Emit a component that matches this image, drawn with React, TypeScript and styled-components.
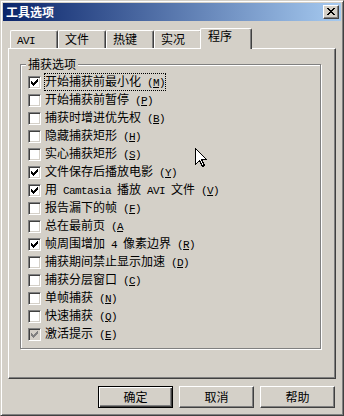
import styled, { createGlobalStyle } from "styled-components";

const face = "#d4d0c8";
const shadow = "#808080";
const dark = "#404040";

const options = [
  { text: "开始捕获前最小化", key: "M", checked: true, focused: true },
  { text: "开始捕获前暂停", key: "P" },
  { text: "捕获时增进优先权", key: "B" },
  { text: "隐藏捕获矩形", key: "H" },
  { text: "实心捕获矩形", key: "S" },
  { text: "文件保存后播放电影", key: "Y", checked: true },
  { text: "用 Camtasia 播放 AVI 文件", key: "V", checked: true },
  { text: "报告漏下的帧", key: "F" },
  { text: "总在最前页", key: "A", open: true },
  { text: "帧周围增加 4 像素边界", key: "R", checked: true },
  { text: "捕获期间禁止显示加速", key: "D" },
  { text: "捕获分层窗口", key: "C" },
  { text: "单帧捕获", key: "N" },
  { text: "快速捕获", key: "Q" },
  { text: "激活提示", key: "E", checked: true, disabled: true },
];

const tabs = ["AVI", "文件", "热键", "实况", "程序"];

const GlobalStyle = createGlobalStyle`
  html, body {
    margin: 0;
    padding: 0;
    background: ${face};
  }
  body {
    font-family: "Noto Sans CJK SC", sans-serif;
    font-size: 12px;
    color: #000;
  }
`;

const Window = styled.div`
  position: relative;
  width: 344px;
  height: 416px;
  box-sizing: border-box;
  background: ${face};
  border: 1px solid;
  border-color: ${face} ${dark} ${dark} ${face};
  box-shadow: inset 1px 1px #fff, inset -1px -1px ${shadow};
  padding: 2px;
  display: flex;
  flex-direction: column;
  overflow: hidden;
`;

const TitleBar = styled.div`
  height: 18px;
  flex: none;
  display: flex;
  align-items: center;
  justify-content: space-between;
  padding: 0 2px 0 3px;
  background: linear-gradient(to right, #0a246a, #a6caf0);
  color: #fff;
  font-weight: bold;
  font-size: 12px;
  line-height: 18px;
`;

const CloseButton = styled.div`
  width: 16px;
  height: 14px;
  box-sizing: border-box;
  background: ${face};
  border: 1px solid;
  border-color: #fff ${dark} ${dark} #fff;
  box-shadow: inset -1px -1px ${shadow};
  display: flex;
  align-items: center;
  justify-content: center;
  padding: 0 1px 1px 0;
`;

const Body = styled.div`
  padding: 7px 5px 0;
  display: flex;
  flex-direction: column;
`;

const TabStrip = styled.div`
  display: flex;
  align-items: flex-end;
  height: 20px;
  padding-left: 2px;
`;

const Tab = styled.div<{ $active?: boolean }>`
  position: relative;
  box-sizing: border-box;
  width: ${({ $active }) => ($active ? 52 : 48)}px;
  height: ${({ $active }) => ($active ? 21 : 18)}px;
  margin: ${({ $active }) => ($active ? "0 -2px -1px" : "0")};
  z-index: ${({ $active }) => ($active ? 1 : 0)};
  background: ${face};
  border-top: 1px solid #fff;
  border-left: 1px solid #fff;
  border-right: 1px solid ${dark};
  border-radius: 2px 2px 0 0;
  box-shadow: inset -1px 0 ${shadow};
  padding: ${({ $active }) => ($active ? "0 0 0 7px" : "1px 0 0 6px")};
  line-height: 14px;
  white-space: nowrap;
`;

const Panel = styled.div`
  width: 328px;
  height: 331px;
  box-sizing: border-box;
  border: 1px solid;
  border-color: #fff ${dark} ${dark} #fff;
  box-shadow: inset -1px -1px ${shadow};
  padding: 15px 0 0 11px;
`;

const Group = styled.div`
  position: relative;
  width: 301px;
  box-sizing: border-box;
  border: 1px solid ${shadow};
  box-shadow: 1px 1px 0 #fff, inset 1px 1px 0 #fff;
  padding: 8px 0 5px 7px;
  display: flex;
  flex-direction: column;
`;

const Legend = styled.div`
  position: absolute;
  top: -8px;
  left: 5px;
  padding: 0 2px;
  background: ${face};
  line-height: 14px;
`;

const Row = styled.div`
  height: 18px;
  display: flex;
  align-items: center;
  gap: 3px;
`;

const Box = styled.span<{ $disabled?: boolean }>`
  width: 13px;
  height: 13px;
  flex: none;
  box-sizing: border-box;
  border: 1px solid;
  border-color: ${shadow} #fff #fff ${shadow};
  box-shadow: inset 1px 1px ${dark}, inset -1px -1px ${face};
  background: ${({ $disabled }) => ($disabled ? face : "#fff")};
  display: flex;
  align-items: center;
  justify-content: center;
`;

const Label = styled.span<{ $focused?: boolean }>`
  line-height: 13px;
  border: 1px dotted ${({ $focused }) => ($focused ? "#000" : "transparent")};
  white-space: nowrap;
`;

const Latin = styled.span`
  font-family: "Liberation Mono", monospace;
  font-size: 11px;
  letter-spacing: -0.6px;
  white-space: pre;
`;

const ButtonRow = styled.div`
  display: flex;
  justify-content: flex-end;
  gap: 6px;
  margin-top: 7px;
  padding-right: 1px;
`;

const Button = styled.div<{ $default?: boolean }>`
  width: 75px;
  height: 22px;
  box-sizing: border-box;
  display: flex;
  align-items: center;
  justify-content: center;
  background: ${face};
  border: 1px solid;
  border-color: ${({ $default }) =>
    $default ? "#000" : `#fff ${dark} ${dark} #fff`};
  box-shadow: ${({ $default }) =>
    $default
      ? `inset 1px 1px #fff, inset -1px -1px ${dark}, inset -2px -2px ${shadow}`
      : `inset -1px -1px ${shadow}`};
  line-height: 14px;
`;

const Cursor = styled.svg`
  position: absolute;
  left: 194px;
  top: 147px;
  z-index: 5;
`;

const mixed = (text: string) =>
  text.split(/([\x20-\x7e]+)/).map((part, i) =>
    /^[\x20-\x7e]+$/.test(part) ? <Latin key={i}>{part}</Latin> : part
  );

const Check = ({ color }: { color: string }) => (
  <svg width="7" height="7" viewBox="0 0 7 7" shapeRendering="crispEdges">
    <path
      fill={color}
      d="M0 2h1v3h-1z M1 3h1v3h-1z M2 4h1v3h-1z M3 3h1v3h-1z M4 2h1v3h-1z M5 1h1v3h-1z M6 0h1v3h-1z"
    />
  </svg>
);

const App = () => (
  <>
    <GlobalStyle />
    <Window>
      <TitleBar>
        <span>工具选项</span>
        <CloseButton>
          <svg width="8" height="7" viewBox="0 0 8 7" shapeRendering="crispEdges">
            <path
              fill="#000"
              d="M0 0h2v1h-2z M6 0h2v1h-2z M1 1h2v1h-2z M5 1h2v1h-2z M2 2h4v1h-4z M3 3h2v1h-2z M2 4h4v1h-4z M1 5h2v1h-2z M5 5h2v1h-2z M0 6h2v1h-2z M6 6h2v1h-2z"
            />
          </svg>
        </CloseButton>
      </TitleBar>
      <Body>
        <TabStrip>
          {tabs.map((t, i) => (
            <Tab key={t} $active={i === tabs.length - 1}>
              {mixed(t)}
            </Tab>
          ))}
        </TabStrip>
        <Panel>
          <Group>
            <Legend>捕获选项</Legend>
            {options.map((o) => (
              <Row key={o.key}>
                <Box $disabled={o.disabled}>
                  {o.checked && <Check color={o.disabled ? shadow : "#000"} />}
                </Box>
                <Label $focused={o.focused}>
                  {mixed(o.text)}
                  <Latin>
                    {" ("}
                    <u>{o.key}</u>
                    {o.open ? "" : ")"}
                  </Latin>
                </Label>
              </Row>
            ))}
          </Group>
        </Panel>
        <ButtonRow>
          <Button $default>确定</Button>
          <Button>取消</Button>
          <Button>帮助</Button>
        </ButtonRow>
      </Body>
      <Cursor width="12" height="20" viewBox="0 0 12 20" shapeRendering="crispEdges">
        <path
          d="M0.5 0.5 L0.5 16.5 L4.5 12.5 L7.5 18.5 L9.5 17.5 L6.5 11.5 L11.5 11.5 Z"
          fill="#fff"
          stroke="#000"
          strokeWidth="1"
        />
      </Cursor>
    </Window>
  </>
);

export default App;
